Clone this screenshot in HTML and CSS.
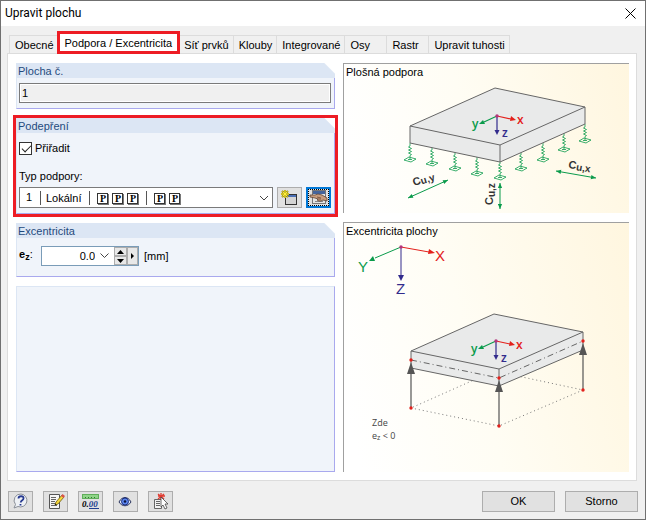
FILE: index.html
```html
<!DOCTYPE html>
<html lang="cs">
<head>
    <meta charset="UTF-8">
    <meta name="viewport" content="width=device-width, initial-scale=1.0">
    <title>Upravit plochu</title>
    <link rel="stylesheet" href="styles.css">
</head>
<body>
    <main class="dialog">
        <header class="titlebar">
            <h1>Upravit plochu</h1>
            <button class="close" type="button" aria-label="Zavřít">
                <svg width="11" height="11" viewBox="0 0 11 11"><path d="M.5 .5l10 10M10.5 .5l-10 10" fill="none" stroke="#000"/></svg>
            </button>
        </header>

        <nav class="tabs" role="tablist">
            <button class="tab" type="button" role="tab">Obecné</button>
            <button class="tab tab-active" type="button" role="tab" aria-selected="true">Podpora / Excentricita</button>
            <button class="tab" type="button" role="tab">Síť prvků</button>
            <button class="tab" type="button" role="tab">Klouby</button>
            <button class="tab" type="button" role="tab">Integrované</button>
            <button class="tab" type="button" role="tab">Osy</button>
            <button class="tab" type="button" role="tab">Rastr</button>
            <button class="tab" type="button" role="tab">Upravit tuhosti</button>
        </nav>

        <div class="panel">
            <div class="column">
                <section class="group">
                    <h2><label for="surface">Plocha č.</label></h2>
                    <div class="group-body">
                        <input class="surface" id="surface" type="text" value="1" readonly>
                    </div>
                </section>

                <section class="group highlighted">
                    <h2>Podepření</h2>
                    <div class="group-body support">
                        <label class="check"><input type="checkbox" checked>Přiřadit</label>
                        <div class="field">
                            <label for="support-type">Typ podpory:</label>
                            <div class="row">
                                <div class="combo">
                                    <select id="support-type"><option>1</option></select>
                                    <div class="combo-detail">
                                        <span class="cell">Lokální</span>
                                        <span class="cell"><b>P</b><b>P</b><b>P</b></span>
                                        <span class="cell"><b>P</b><b>P</b></span>
                                    </div>
                                    <svg class="chevron" width="10" height="6" viewBox="0 0 10 6"><path d="M1 1l4 4 4-4" fill="none" stroke="#444"/></svg>
                                </div>
                                <button class="tool" type="button" aria-label="Nový typ podpory">
                                    <svg width="19" height="17" viewBox="0 0 19 17">
                                        <rect x="5.5" y="5.5" width="11" height="10" fill="#d4d4d4" stroke="#333"/>
                                        <path d="M6 6h10v2H6z" fill="#4a6fb5"/>
                                        <path d="M5 1v8M1 5h8M2 2l6 6M8 2l-6 6" stroke="#9a8d10" stroke-width="2"/>
                                        <path d="M5 1v8M1 5h8M2.5 2.5l5 5M7.5 2.5l-5 5" stroke="#ffef3a"/>
                                    </svg>
                                </button>
                                <button class="tool tool-focus" type="button" aria-label="Upravit typ podpory">
                                    <svg width="19" height="15" viewBox="0 0 19 15">
                                        <rect x="3.5" y=".5" width="13" height="13" fill="#e4e4e4" stroke="#777"/>
                                        <path d="M4 1h12v3H4z" fill="#43649c"/>
                                        <path d="M6 11.5h8" stroke="#888"/>
                                        <path d="M1 5l5 0 3-1 4 1 5 3v3l-4-1-2 1-2 0-2-1 1-1-3-1-5-1z" fill="#c79c7d" stroke="#5e4434" stroke-width=".8"/>
                                        <path d="M8 7l4 1M9 9l3 0" stroke="#6d4b38" stroke-width=".8"/>
                                    </svg>
                                </button>
                            </div>
                        </div>
                    </div>
                </section>

                <section class="group">
                    <h2>Excentricita</h2>
                    <div class="group-body eccentricity">
                        <label for="ez"><b>e<small>z</small></b>:</label>
                        <div class="spin">
                            <input id="ez" type="text" value="0.0">
                            <button class="spin-list" type="button" aria-label="Seznam hodnot">
                                <svg width="9" height="6" viewBox="0 0 9 6"><path d="M.5 .5l4 4 4-4" fill="none" stroke="#444"/></svg>
                            </button>
                            <span class="spin-steps">
                                <button type="button" aria-label="Zvýšit"><svg width="7" height="4" viewBox="0 0 7 4"><path d="M0 4l3.5-4L7 4z"/></svg></button>
                                <button type="button" aria-label="Snížit"><svg width="7" height="4" viewBox="0 0 7 4"><path d="M0 0l3.5 4L7 0z"/></svg></button>
                            </span>
                            <button class="spin-more" type="button" aria-label="Další"><svg width="4" height="6" viewBox="0 0 4 6"><path d="M0 0l3 3-3 3z"/></svg></button>
                        </div>
                        <span>[mm]</span>
                    </div>
                </section>

                <section class="group group-empty"></section>
            </div>

            <div class="column">
                <figure class="picture">
                    <figcaption>Plošná podpora</figcaption>
                    <svg viewBox="1 17 285 133">
                        <defs>
                            <!-- spring with its ground plate, hangs from 0,0 -->
                            <g id="spring" fill="none" stroke="#0a9b4b" stroke-width=".8">
                                <path d="M0 0v3l-1.5 1 3 1.5-3 1.5 3 1.5-3 1.5 3 1.5-1.5 1v4"/>
                                <path d="M-6 17l5-3 7 2-5 3zM-2 16.5h4"/>
                            </g>
                            <marker id="tip" viewBox="0 0 6 6" refX="6" refY="3" markerWidth="6" markerHeight="5" markerUnits="userSpaceOnUse" orient="auto-start-reverse"><path d="M0 .5L6 3 0 5.5z" fill="#0a9b4b" stroke="none"/></marker>
                            <g id="axes">
                                <path d="M0 0l-13 6" stroke="#0a9b4b" stroke-width="1.2"/>
                                <path d="M-18 8l4-4 2 4z" fill="#0a9b4b"/>
                                <path d="M0 0l14 3" stroke="#e3201b" stroke-width="1.2"/>
                                <path d="M19 4l-5-4-1 5z" fill="#e3201b"/>
                                <path d="M0 0v14" stroke="#322b8c" stroke-width="1.2"/>
                                <path d="M0 19l-2.500-5h5z" fill="#322b8c"/>
                                <circle r="1.7" fill="#b5357c"/>
                                <g class="axis-label">
                                    <text x="-25" y="12" fill="#0a9b4b">y</text>
                                    <text x="20" y="8" fill="#e3201b">x</text>
                                    <text x="5" y="21" fill="#322b8c">z</text>
                                </g>
                            </g>
                        </defs>
                        <use href="#spring" x="67" y="80"/>
                        <use href="#spring" x="89" y="84"/>
                        <use href="#spring" x="112" y="89"/>
                        <use href="#spring" x="134" y="94"/>
                        <use href="#spring" x="157" y="98"/>
                        <use href="#spring" x="178" y="89"/>
                        <use href="#spring" x="200" y="80"/>
                        <use href="#spring" x="221" y="70"/>
                        <use href="#spring" x="242" y="61"/>
                        <g class="slab">
                            <path d="M152 25l90 19v17l-85 38-90-19V63z"/>
                            <path d="M67 63l90 19 85-38M157 82v17" fill="none"/>
                        </g>
                        <use href="#axes" x="154" y="53"/>
                        <g class="direction">
                            <path d="M65 135l40-18"/>
                            <path d="M157 120v26"/>
                            <path d="M213 108l40 7"/>
                        </g>
                        <g class="spring-label">
                            <text transform="translate(71 123) rotate(-18)">C<tspan class="index" dy="1">u,y</tspan></text>
                            <text transform="translate(150 142) rotate(-90)">C<tspan class="index" dy="2">u,z</tspan></text>
                            <text transform="translate(225 105) rotate(9)">C<tspan class="index" dy="1">u,x</tspan></text>
                        </g>
                    </svg>
                </figure>

                <figure class="picture picture-tall">
                    <figcaption>Excentricita plochy</figcaption>
                    <svg viewBox="1 17 285 233">
                        <path d="M58 25l-26 11" stroke="#0a9b4b"/>
                        <path d="M26 39l4-5 2 5z" fill="#0a9b4b"/>
                        <path d="M58 25l28 5" stroke="#e3201b"/>
                        <path d="M92 31l-6-4-1 5z" fill="#e3201b"/>
                        <path d="M58 25v28" stroke="#322b8c"/>
                        <path d="M58 59l-3-6h6z" fill="#322b8c"/>
                        <circle cx="58" cy="25" r="1.7" fill="#b5357c"/>
                        <g class="global-label">
                            <text x="15" y="50" fill="#0a9b4b">Y</text>
                            <text x="92" y="39" fill="#e3201b">X</text>
                            <text x="53" y="72" fill="#322b8c">Z</text>
                        </g>

                        <path d="M68 186l88 18 84-36-89-19z" fill="none" stroke="#777" stroke-dasharray="1 3"/>
                        <g class="slab">
                            <path d="M151 92l89 18v18l-84 36-88-18v-17z"/>
                            <path d="M68 129l88 18 84-37M156 147v17" fill="none"/>
                        </g>
                        <path d="M68 138l88 18 84-37" fill="none" stroke="#444" stroke-width=".8" stroke-dasharray="6 3 1 3"/>
                        <use href="#axes" x="153" y="119"/>

                        <path d="M68 186v-35M156 204v-35M240 168v-35" stroke="#555" stroke-width="1.2"/>
                        <path d="M68 140l-4 12h8zM156 158l-4 12h8zM240 121l-4 12h8z" fill="#555"/>
                        <g fill="#e3201b">
                            <circle cx="68" cy="138" r="1.7"/>
                            <circle cx="156" cy="156" r="1.7"/>
                            <circle cx="240" cy="119" r="1.7"/>
                            <circle cx="68" cy="186" r="1.7"/>
                            <circle cx="156" cy="204" r="1.7"/>
                            <circle cx="240" cy="168" r="1.7"/>
                        </g>
                        <g class="note">
                            <text x="29" y="204">Zde</text>
                            <text x="29" y="217">e<tspan class="sub">z</tspan> &lt; 0</text>
                        </g>
                    </svg>
                </figure>
            </div>
        </div>

        <footer class="footer">
            <button class="tool" type="button" aria-label="Nápověda">
                <svg width="17" height="17" viewBox="0 0 17 17">
                    <path d="M9 1a6.5 6.5 0 1 1-3 12.500L2 15l1.500-3.500A6.5 6.5 0 0 1 9 1z" fill="#eef1f5" stroke="#8a8f98"/>
                    <path d="M6.5 5.5c0-3 5.500-3 5 0 0 2-2.500 1.500-2.800 4M8.500 11v1.500" fill="none" stroke="#26398f" stroke-width="1.8"/>
                </svg>
            </button>
            <button class="tool" type="button" aria-label="Komentář">
                <svg width="18" height="17" viewBox="0 0 18 17">
                    <path d="M2.5 1.5h10v14h-10z" fill="#f6f6f6" stroke="#555"/>
                    <path d="M4 4.500h5M4 6.500h5M4 8.500h4M4 10.500h4M4 12.500h6" stroke="#666"/>
                    <path d="M8 12l1-3 6-7 2 2-6 7z" fill="#f7d83a" stroke="#6b5a10" stroke-width=".8"/>
                    <path d="M14 3l1.500-2L18 3l-1.500 2z" fill="#d9534a"/>
                    <path d="M8 12l.5-1.500 1 1z"/>
                </svg>
            </button>
            <button class="tool" type="button" aria-label="Jednotky a desetinná místa">
                <svg width="19" height="17" viewBox="0 0 19 17">
                    <rect x="1.5" y="1.5" width="16" height="4" fill="#8fd488" stroke="#5fae5a"/>
                    <path d="M4.500 4v1M7.500 4v1M10.500 4v1M13.500 4v1" stroke="#2f7a2c"/>
                    <text class="digits" x="1" y="14">0.<tspan fill="#1d3f8f">00</tspan></text>
                    <path d="M8 15.500h10" stroke="#1d3f8f"/>
                </svg>
            </button>
            <button class="tool" type="button" aria-label="Zobrazit">
                <svg width="15" height="11" viewBox="0 0 15 11">
                    <path d="M1 6c3-6 9-6 12 0-3 5-9 5-12 0z" fill="#dfe8fa" stroke="#28325c"/>
                    <circle cx="7" cy="5.500" r="3.500" fill="#5b86ee" stroke="#1c2f80"/>
                    <circle cx="7" cy="5.500" r="1.300" fill="#0b1440"/>
                </svg>
            </button>
            <button class="tool" type="button" aria-label="Vybrat">
                <svg width="18" height="17" viewBox="0 0 18 17">
                    <path d="M2.5 6.5h7v9h-7z" fill="#f2f2f2" stroke="#666"/>
                    <path d="M4 8.500h4M4 10.500h4M4 12.500h4" stroke="#666"/>
                    <path d="M9 0v7M6 3h7M6 1l6 5M12 1L6 6" stroke="#e03a30" stroke-width="1.3"/>
                    <path d="M9 4v10l2-2 2 4 2-1-2-4h3z" fill="#fff" stroke="#444" stroke-width=".8"/>
                </svg>
            </button>
            <button class="action action-first" type="button">OK</button>
            <button class="action" type="button">Storno</button>
        </footer>
    </main>
</body>
</html>
```
FILE: styles.css
```css
* {
    margin: 0;
    padding: 0;
    box-sizing: border-box;
}

body {
    font-family: 'Liberation Sans', Arial, sans-serif;
    font-size: 11px;
    line-height: 13px;
    color: #000;
    background: #f0f0f0;
}

button,
input,
select {
    font: inherit;
    color: inherit;
    border-radius: 0;
}

svg {
    display: block;
}

.dialog {
    display: flex;
    flex-direction: column;
    min-height: 100vh;
    border: 1px solid #707070;
    background: #f0f0f0;
}

/* Title bar */
.titlebar {
    display: flex;
    align-items: center;
    justify-content: space-between;
    height: 25px;
    padding: 0 9px 0 4px;
    background: #fff;
}

.titlebar h1 {
    font-family: Roboto, sans-serif;
    font-size: 12px;
    font-weight: 400;
}

.close {
    border: 0;
    background: none;
}

/* Tabs */
.tabs {
    display: flex;
    align-items: flex-end;
    height: 27px;
    padding-left: 8px;
}

.tab {
    min-width: 42px;
    height: 18px;
    padding: 2px 4px 0 5px;
    border: 1px solid #dcdcdc;
    border-width: 1px 1px 0 0;
    background: #f0f0f0;
    text-align: left;
    white-space: nowrap;
}

.tab:first-child {
    border-left-width: 1px;
}

.tab-active {
    position: relative;
    height: 23px;
    margin: 0 -1px -1px -2px;
    padding: 1px 5px 0;
    border: 3px solid #ed1c24;
    background: #fff;
}

/* Panel */
.panel {
    flex: 1;
    display: grid;
    grid-template-columns: 319fr 286fr;
    gap: 8px;
    margin: 0 8px 0 6px;
    padding: 9px 7px 8px 8px;
    border: 1px solid #dcdcdc;
    background: #fff;
}

.column {
    display: flex;
    flex-direction: column;
    gap: 9px;
}

.group {
    border: 1px solid #a9a9ee;
    border-top: 0;
    border-left-color: #dce6f4;
    background: #f0f4fa;
}

.group h2 {
    height: 15px;
    margin: 0 -1px;
    padding-left: 2px;
    font-size: 11px;
    font-weight: 400;
    line-height: 16px;
    color: #1f4a7d;
    background: linear-gradient(225deg, #fff 7px, #dce6f4 8px);
}

.group-body {
    padding: 5px 3px 5px 2px;
}

.highlighted {
    outline: 3px solid #ed1c24;
}

.group-empty {
    flex: 1;
    border-top: 1px solid #dce6f4;
}

.surface {
    display: block;
    width: 100%;
    height: 20px;
    padding: 0 2px;
    border: 1px solid #7a7a7a;
    background: #f0f0f0;
    box-shadow: inset 0 0 0 1px #fff;
}

/* Support */
.support {
    display: flex;
    flex-direction: column;
    gap: 15px;
    padding-top: 9px;
}

.check {
    display: flex;
    align-items: center;
    gap: 3px;
}

.check input {
    width: 13px;
    height: 13px;
    appearance: none;
    border: 1px solid #333;
    background: #fff;
}

.check input:checked::before {
    content: "";
    display: block;
    width: 8px;
    height: 4px;
    margin: 2px 0 0 2px;
    border: solid #222;
    border-width: 0 0 1px 1px;
    transform: rotate(-45deg);
}

.field {
    display: flex;
    flex-direction: column;
    gap: 4px;
}

.row {
    display: flex;
    gap: 4px;
}

.combo {
    position: relative;
    flex: 1;
}

.combo select {
    display: block;
    width: 100%;
    height: 21px;
    padding: 0 6px;
    appearance: none;
    border: 1px solid #7a7a7a;
    background: #fff;
}

.combo-detail {
    position: absolute;
    top: 4px;
    left: 21px;
    display: flex;
    pointer-events: none;
}

.cell {
    display: flex;
    align-items: center;
    gap: 4px;
    height: 14px;
    padding: 0 8px 0 5px;
    border-left: 1px solid #555;
}

.cell + .cell {
    padding-left: 7px;
}

.cell b {
    width: 11px;
    height: 11px;
    border: 1px solid #333;
    box-shadow: 1px 1px 0 #777;
    font: bold 10px/9px 'Liberation Serif', serif;
    text-align: center;
}

.chevron {
    position: absolute;
    top: 8px;
    right: 4px;
    pointer-events: none;
}

.tool {
    display: flex;
    align-items: center;
    justify-content: center;
    width: 25px;
    height: 21px;
    border: 1px solid #adadad;
    background: #e1e1e1;
}

.tool-focus {
    border: 2px solid #0078d7;
    outline: 1px dotted #000;
    outline-offset: -3px;
}

/* Eccentricity */
.eccentricity {
    display: flex;
    align-items: center;
    gap: 5px;
    padding: 8px 2px 10px;
}

.eccentricity label {
    width: 17px;
}

.eccentricity small {
    font-size: 9px;
    vertical-align: -2px;
}

.spin {
    display: flex;
    width: 98px;
    height: 20px;
    border: 1px solid #7a9cb8;
    background: #fff;
}

.spin input {
    flex: 1;
    min-width: 0;
    border: 0;
    background: none;
    text-align: right;
}

.spin button {
    display: flex;
    align-items: center;
    justify-content: center;
    border: 1px solid #adadad;
    background: #e8e8e8;
}

.spin .spin-list {
    width: 19px;
    border: 0;
    background: none;
}

.spin-steps {
    display: flex;
    flex-direction: column;
    width: 13px;
}

.spin-steps button {
    flex: 1;
}

.spin-more {
    width: 11px;
}

/* Pictures */
.picture {
    border: 1px solid #a0a0a0;
    border-width: 1px 0 0 1px;
    background: linear-gradient(75deg, #fff 5%, #fffdf4 45%, #fff6df);
}

.picture-tall {
    flex: 1;
}

.picture figcaption {
    height: 16px;
    padding-left: 2px;
    line-height: 17px;
}

.picture svg {
    width: 100%;
}

.slab {
    fill: #e9eaea;
    stroke: #666;
    stroke-linejoin: round;
}

.direction {
    stroke: #0a9b4b;
    marker-start: url(#tip);
    marker-end: url(#tip);
}

.axis-label {
    font: 600 12px 'Open Sans', sans-serif;
}

.spring-label {
    font-size: 11px;
    font-weight: bold;
    fill: #333;
}

.index {
    font-size: 10px;
}

.global-label {
    font-size: 15px;
}

.note {
    font: 9px 'Open Sans', sans-serif;
    fill: #444;
}

.sub {
    font-size: 7px;
    baseline-shift: -1px;
}

/* Footer */
.footer {
    display: flex;
    gap: 10px;
    padding: 10px 7px 7px;
}

.digits {
    font: italic bold 9px 'Liberation Serif', serif;
}

.action {
    width: 73px;
    height: 21px;
    border: 1px solid #adadad;
    background: #e1e1e1;
}

.action-first {
    margin-left: auto;
}
```
